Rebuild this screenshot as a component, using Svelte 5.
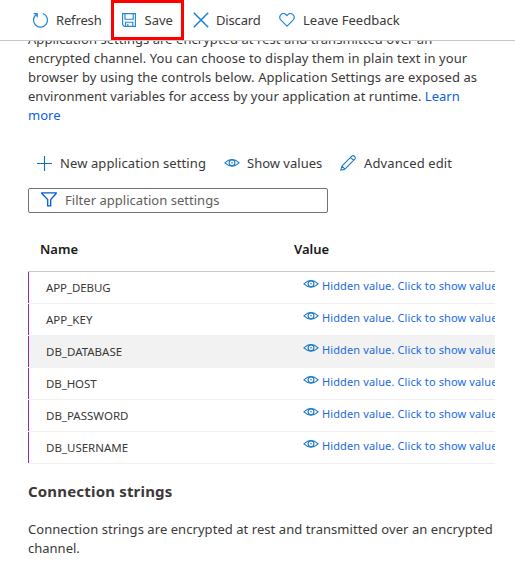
<script>
  const rows = ['APP_DEBUG', 'APP_KEY', 'DB_DATABASE', 'DB_HOST', 'DB_PASSWORD', 'DB_USERNAME'];
</script>

{#snippet eye()}
  <svg class="eye" width="16" height="10" viewBox="0 0 16 10" fill="none" stroke="#1b7ac4" stroke-width="1.1">
    <path d="M.9 4.8Q8-1.8 15.1 4.8Q8 11.4.9 4.8Z" />
    <circle cx="8" cy="4.8" r="2.9" />
    <circle cx="8" cy="4.8" r=".8" fill="#1b7ac4" stroke="none" />
  </svg>
{/snippet}

<div class="page">
  <header>
    <button class="cmd refresh">
      <svg width="17" height="17" viewBox="0 0 17 17" fill="none" stroke="#2488d8" stroke-width="1.25">
        <path d="M10.8 1.5A7 7 0 1 1 4.9 2.1M1.6 1.7H5.2V5.3" />
      </svg>
      <span>Refresh</span>
    </button>
    <button class="cmd save">
      <svg width="14" height="14" viewBox="0 0 14 14" fill="none" stroke="#2488d8" stroke-width="1.15">
        <path d="M.6.6H13.4V13.4H2.3L.6 11.7ZM3 .6V6.2H11.2V.6M3.5 13.3V9.2H10.8V13.3M5.8 10.8V13.3" />
      </svg>
      <span>Save</span>
    </button>
    <button class="cmd discard">
      <svg width="16" height="16" viewBox="0 0 16 16" fill="none" stroke="#1683d8" stroke-width="1.5">
        <path d="M.8.8L15.2 15.2M15.2.8L.8 15.2" />
      </svg>
      <span>Discard</span>
    </button>
    <button class="cmd feedback">
      <svg width="16" height="14" viewBox="0 0 16 14" fill="none" stroke="#2488d8" stroke-width="1.2">
        <path d="M8 13.1L1.7 6.8C-1.2 3.3 3.6-1.7 7.1 1.7L8 2.6L8.9 1.7C12.4-1.7 17.2 3.3 14.3 6.8Z" />
      </svg>
      <span>Leave Feedback</span>
    </button>
  </header>

  <main>
    <p class="intro">
      <span class="l1">Application settings are encrypted at rest and transmitted over an</span>
      <span class="l2">encrypted channel. You can choose to display them in plain text in your</span>
      <span class="l3">browser by using the controls below. Application Settings are exposed as</span>
      <span class="l4">environment variables for access by your application at runtime. <a href="#learn">Learn</a></span>
      <span class="l5"><a href="#learn">more</a></span>
    </p>

    <div class="tools">
      <button class="cmd add">
        <svg width="15" height="15" viewBox="0 0 15 15" stroke="#0f6cbd" stroke-width="1.1">
          <path d="M7.5 0V15M0 7.5H15" />
        </svg>
        <span>New application setting</span>
      </button>
      <button class="cmd show">{@render eye()}<span>Show values</span></button>
      <button class="cmd edit">
        <svg width="16" height="16" viewBox="0 0 16 16" fill="none" stroke="#1b7ac4" stroke-width="1.1" stroke-linejoin="round">
          <path d="M.8 15.2L1.9 11.1L11.8 1.2Q13.2 0 14.6 1.4Q16 2.8 14.8 4.2L4.9 14.1ZM10.6 2.4L13.6 5.4M1.9 11.1L4.9 14.1" />
        </svg>
        <span>Advanced edit</span>
      </button>
    </div>

    <label class="filter">
      <svg width="16" height="15" viewBox="0 0 16 15" fill="none" stroke="#015cda" stroke-width="1.3">
        <path d="M.8.8H15.2V1.5L9.7 7.5V13.8H6.7V7.5L.8 1.5Z" />
      </svg>
      <span>Filter application settings</span>
    </label>

    <div class="table">
      <div class="head"><b class="name">Name</b><b class="value">Value</b></div>
      {#each rows as row, i}
        <div class="row" class:selected={i === 2}>
          <span class="name n{i}">{row}</span>
          <a class="value" href="#show">{@render eye()}<span>Hidden value. Click to show value</span></a>
        </div>
      {/each}
    </div>

    <h2><span>Connection strings</span></h2>
    <p class="conn">
      <span class="c1">Connection strings are encrypted at rest and transmitted over an encrypted</span>
      <span class="c2">channel.</span>
    </p>
  </main>
</div>

<style>
  .page {
    width: 515px;
    height: 568px;
    overflow: hidden;
    background: #fff;
    color: #3a3938;
    font: 13px/19px 'Noto Sans', 'Open Sans', sans-serif;
    white-space: nowrap;
  }
  header {
    position: relative;
    z-index: 1;
    box-sizing: border-box;
    height: 41px;
    display: flex;
    align-items: flex-start;
    border-bottom: 1px solid #c8c8c8;
    background: #fff;
  }
  button {
    border: 0;
    padding: 0;
    background: none;
    color: inherit;
    font: inherit;
  }
  .cmd { display: flex; align-items: center; box-sizing: border-box; flex: none; }
  svg { display: block; flex: none; }
  header .cmd { height: 40px; }
  .refresh { width: 111px; padding-left: 32px; gap: 7px; letter-spacing: -0.15px; }
  .save { width: 73px; padding-left: 8px; gap: 8.5px; border: 3px solid #f00; }
  .discard { width: 95px; padding-left: 8.5px; gap: 7.5px; letter-spacing: -0.15px; }
  .feedback { gap: 8px; }
  main { padding-left: 28px; }
  p { margin: 0; }
  p span { display: block; }
  .intro { margin-top: -11px; height: 95px; }
  .l1 { letter-spacing: 0.045px; }
  .l2, .l3 { letter-spacing: 0.083px; }
  .l4 { letter-spacing: 0.025px; }
  a { color: #0b61dc; text-decoration: none; }
  .tools { display: flex; margin-top: 28px; height: 21px; }
  .add { width: 196px; padding-left: 9px; gap: 8px; letter-spacing: 0.1px; }
  .show { width: 116px; gap: 7px; }
  .tools .eye { margin-top: -2px; }
  .edit { gap: 8px; letter-spacing: 0.12px; }
  .edit svg { margin-top: -2px; }
  .filter {
    display: flex;
    align-items: center;
    box-sizing: border-box;
    width: 300px;
    height: 25px;
    margin-top: 14px;
    padding-left: 12px;
    gap: 8px;
    border: 1px solid #74716f;
    border-radius: 2px;
    color: #605e5c;
    letter-spacing: 0.03px;
  }
  .filter svg { margin-top: -2px; }
  .table { width: 467px; margin-top: 14px; overflow: hidden; }
  .head { display: flex; align-items: center; height: 44px; border-bottom: 1px solid #c3cbd3; color: #1b1a19; }
  b { font-weight: 600; }
  .head .name { width: 254px; padding-left: 12px; }
  .row {
    display: flex;
    box-sizing: border-box;
    height: 32px;
    border-bottom: 1px solid #f0f0f0;
    background: linear-gradient(#8a2da5, #8a2da5) 0 0 / 1px 100% no-repeat;
    font-size: 11px;
    line-height: 31px;
  }
  .row.selected { background-color: #f2f2f2; }
  .row .name { flex: none; width: 256.5px; padding-left: 18px; font-size: 11.5px; }
  .row .n0, .row .n3 { letter-spacing: -0.1px; }
  .row .value { display: flex; flex: none; gap: 3.5px; line-height: 28px; letter-spacing: 0.12px; color: #1a6ce0; }
  .row .eye { margin-top: 7px; }
  h2 { margin: 17px 0 0; font-size: 15px; line-height: 20px; font-weight: 700; letter-spacing: 0.18px; }
  .conn { margin-top: 19px; }
  .c1 { letter-spacing: 0.055px; }
</style>
